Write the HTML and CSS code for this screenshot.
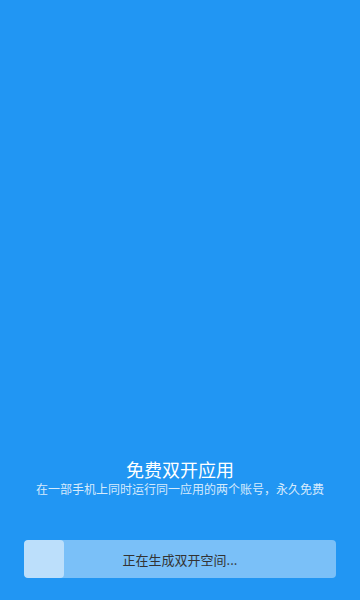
FILE: index.html
```html
<!DOCTYPE html>
<html lang="zh-CN">
<head>
<meta charset="utf-8">
<meta name="viewport" content="width=device-width, initial-scale=1">
<title>免费双开应用</title>
<link rel="stylesheet" href="styles.css">
</head>
<body>
<main class="screen">
  <section class="intro">
    <h1 class="title">免费双开应用</h1>
    <p class="subtitle">在一部手机上同时运行同一应用的两个账号，永久免费</p>
  </section>
  <div class="progress">
    <div class="progress-fill" style="width: 40px"></div>
    <span class="progress-label">正在生成双开空间...</span>
  </div>
</main>
</body>
</html>
```

FILE: styles.css
```css
* { box-sizing: border-box; }
html, body {
  margin: 0;
  padding: 0;
  height: 100%;
}
body {
  background: #2196f3;
  font-family: "Noto Sans CJK SC", "Noto Sans", sans-serif;
}
.screen {
  height: 100vh;
  display: flex;
  flex-direction: column;
  justify-content: flex-end;
  padding: 0 24px 22px;
}
.intro {
  text-align: center;
  color: #fff;
}
.title {
  margin: 0;
  font-size: 18px;
  line-height: 24px;
  font-weight: 400;
}
.subtitle {
  margin: 0;
  font-size: 12px;
  line-height: 16px;
  color: rgba(255, 255, 255, 0.82);
}
.progress {
  position: relative;
  margin-top: 43px;
  height: 38px;
  border-radius: 4px;
  background: #7ac0f8;
  display: flex;
  align-items: center;
  justify-content: center;
  overflow: hidden;
}
.progress-fill {
  position: absolute;
  left: 0;
  top: 0;
  bottom: 0;
  border-radius: 4px;
  background: #bcdffb;
}
.progress-label {
  position: relative;
  font-size: 13px;
  color: #333;
}
```
